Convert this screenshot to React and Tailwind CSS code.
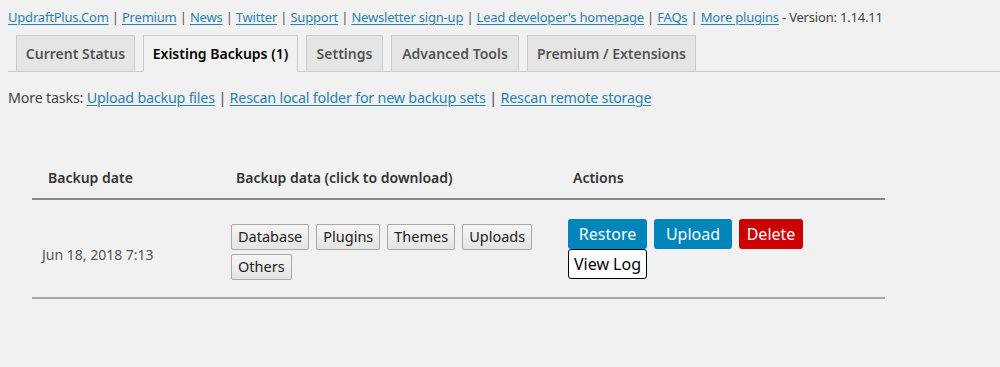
import React from 'react';

const links = [
    'UpdraftPlus.Com',
    'Premium',
    'News',
    'Twitter',
    'Support',
    'Newsletter sign-up',
    "Lead developer's homepage",
    'FAQs',
    'More plugins',
];

const tabs = [
    { label: 'Current Status', w: 'w-[119px]' },
    { label: 'Existing Backups (1)', w: 'w-[155px]', active: true },
    { label: 'Settings', w: 'w-[77px]' },
    { label: 'Advanced Tools', w: 'w-[128px]' },
    { label: 'Premium / Extensions', w: 'w-[169px]' },
];

const FileButton = ({ children }) => (
    <button className="h-[26px] px-[6px] border border-[#a9a9a9] rounded-[2px] bg-gradient-to-b from-[#f6f6f6] to-[#e4e4e4] text-[14.5px] text-[#222] leading-none">
        {children}
    </button>
);

const App = () => {
    return (
        <div className="w-[1000px] h-[367px] bg-[#f1f1f1] overflow-hidden text-[#444]" style={{ fontFamily: '"Noto Sans", "Open Sans", sans-serif' }}>
            {/* Plugin links */}
            <div className="pl-[8px] pt-[7px] text-[13px] leading-[20px] tracking-[-0.2px]">
                {links.map((l, i) => (
                    <React.Fragment key={l}>
                        <a href="#" className="text-[#2a82b0] underline underline-offset-2">{l}</a>
                        {i < links.length - 1 && <span className="text-[#555]"> | </span>}
                    </React.Fragment>
                ))}
                <span className="text-[#444]"> - Version: 1.14.11</span>
            </div>

            {/* Tabs */}
            <div className="mt-[8px] ml-[8px] border-b border-[#ccc] flex items-end gap-[8px] pl-[8px] h-[37px]">
                {tabs.map((t) => (
                    <div
                        key={t.label}
                        className={`${t.w} h-[37px] flex items-center justify-center border border-[#ccc] text-[14px] font-semibold -mb-px ${
                            t.active ? 'bg-[#f1f1f1] border-b-[#f1f1f1] text-black' : 'bg-[#e5e5e5] text-[#555]'
                        }`}
                    >
                        {t.label}
                    </div>
                ))}
            </div>

            {/* More tasks */}
            <div className="pl-[8px] mt-[16px] text-[14.3px] leading-[20px] tracking-[-0.2px]">
                <span className="text-[#444]">More tasks: </span>
                <a href="#" className="text-[#2a82b0] underline underline-offset-2">Upload backup files</a>
                <span> | </span>
                <a href="#" className="text-[#2a82b0] underline underline-offset-2">Rescan local folder for new backup sets</a>
                <span> | </span>
                <a href="#" className="text-[#2a82b0] underline underline-offset-2">Rescan remote storage</a>
            </div>

            {/* Backups table */}
            <div className="ml-[32px] w-[853px] mt-[48px]">
                <div className="flex items-center h-[44px] border-b-2 border-[#888] text-[14px] font-semibold text-[#333]">
                    <div className="w-[204px] pl-[16px]">Backup date</div>
                    <div className="w-[337px]">Backup data (click to download)</div>
                    <div>Actions</div>
                </div>
                <div className="flex items-center h-[99px] border-b-2 border-[#aaa]">
                    <div className="w-[199px] pl-[10px] pt-[12px] text-[14px] text-[#555]">Jun 18, 2018 7:13</div>
                    <div className="w-[337px] flex flex-wrap gap-x-[7px] gap-y-[4px] pt-[6px]">
                        <FileButton>Database</FileButton>
                        <FileButton>Plugins</FileButton>
                        <FileButton>Themes</FileButton>
                        <FileButton>Uploads</FileButton>
                        <FileButton>Others</FileButton>
                    </div>
                    <div className="flex flex-col items-start">
                        <div className="flex gap-[7px]">
                            <button className="w-[79px] h-[30px] rounded-[3px] bg-[#0085ba] text-white text-[16px] leading-none">Restore</button>
                            <button className="w-[78px] h-[30px] rounded-[3px] bg-[#0085ba] text-white text-[16px] leading-none">Upload</button>
                            <button className="w-[64px] h-[30px] rounded-[3px] bg-[#cc0000] text-white text-[16px] leading-none">Delete</button>
                        </div>
                        <button className="w-[79px] h-[30px] border border-black rounded-[3px] bg-white text-black text-[16px] leading-none">View Log</button>
                    </div>
                </div>
            </div>
        </div>
    );
};

export default App;
